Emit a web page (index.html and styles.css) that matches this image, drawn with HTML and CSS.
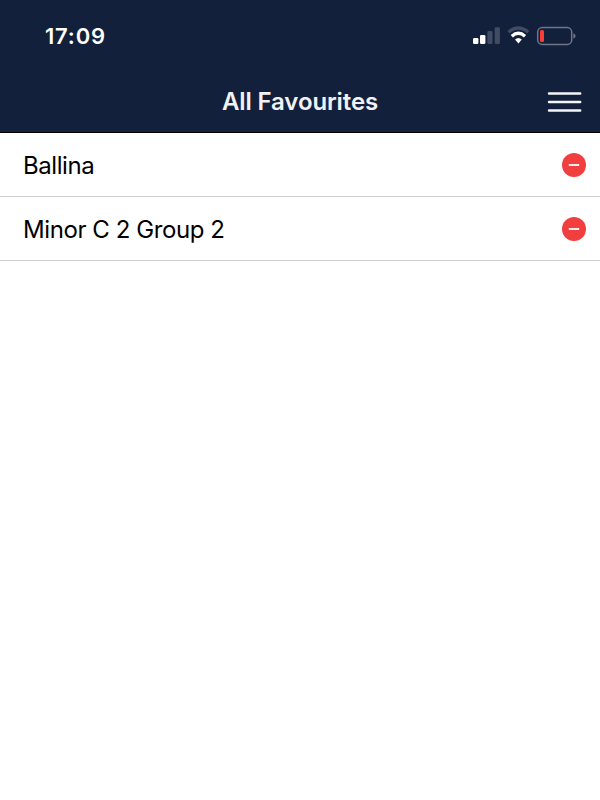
FILE: index.html
```html
<!DOCTYPE html>
<html lang="en">
<head>
  <meta charset="utf-8">
  <title>All Favourites</title>
  <link rel="stylesheet" href="styles.css">
</head>
<body>
  <header class="header">
    <div class="status-bar">
      <span class="time">17:09</span>
      <svg class="status-icons" width="104" height="20" viewBox="0 0 104 20">
        <!-- signal -->
        <rect x="1" y="12" width="5.4" height="6" rx="1.3" fill="#fff"/>
        <rect x="8" y="9" width="5.4" height="9" rx="1.3" fill="#fff"/>
        <rect x="15.3" y="5" width="5.2" height="13" rx="1.3" fill="#414b61"/>
        <rect x="22.7" y="1.3" width="5.2" height="16.7" rx="1.3" fill="#414b61"/>
        <!-- wifi -->
        <path d="M36.5 6.2Q46.4-2.2 56.3 6.2" fill="none" stroke="#414b61" stroke-width="3.2"/>
        <path d="M39.8 10.2Q46.4 4.4 53 10.2" fill="none" stroke="#fff" stroke-width="3.4"/>
        <path d="M43 13.6Q46.4 10.6 49.8 13.6L46.4 17.6Z" fill="#fff"/>
        <!-- battery -->
        <rect x="65.7" y="1.6" width="34" height="16.8" rx="4.5" fill="none" stroke="#6e7688" stroke-width="1.5"/>
        <rect x="68" y="4" width="4" height="12" rx="1.5" fill="#fb3d36"/>
        <path d="M101.4 7.2Q103.6 8.2 103.6 10T101.4 12.8Z" fill="#6e7688"/>
      </svg>
    </div>
    <div class="nav-bar">
      <h1>All Favourites</h1>
      <svg class="menu" width="36" height="22" viewBox="0 0 36 22" stroke="#f4f5fa" stroke-width="2.4" stroke-linecap="round">
        <path d="M2 2.5H33.2M2 11H33.2M2 19.5H33.2"/>
      </svg>
    </div>
  </header>

  <ul class="favourites">
    <li>
      <span class="name">Ballina</span>
      <svg class="remove" width="24" height="24" viewBox="0 0 24 24">
        <circle cx="12" cy="12" r="12" fill="#f13e3f"/>
        <path d="M6.8 12H17.2" stroke="#fff" stroke-width="1.8"/>
      </svg>
    </li>
    <li>
      <span class="name">Minor C 2 Group 2</span>
      <svg class="remove" width="24" height="24" viewBox="0 0 24 24">
        <circle cx="12" cy="12" r="12" fill="#f13e3f"/>
        <path d="M6.8 12H17.2" stroke="#fff" stroke-width="1.8"/>
      </svg>
    </li>
  </ul>
</body>
</html>
```
FILE: styles.css
```css
body {
  margin: 0;
  background: #fff;
  font-family: Inter, "Liberation Sans", sans-serif;
  color: #000;
}

.header {
  box-sizing: border-box;
  height: 133px;
  background: #13203b;
  border-bottom: 1px solid #000;
  color: #fff;
}

.status-bar {
  display: flex;
  align-items: center;
  justify-content: space-between;
  height: 72px;
  padding: 0 24px 0 45px;
}

.time {
  font-size: 22px;
  font-weight: 600;
  letter-spacing: 0.8px;
}

.nav-bar {
  display: grid;
  grid-template-columns: 1fr auto 1fr;
  align-items: center;
  height: 60px;
  padding: 0 17px;
}

.nav-bar h1 {
  grid-column: 2;
  margin: 0;
  padding-bottom: 2px;
  font-size: 24px;
  font-weight: 600;
  letter-spacing: -0.12px;
  color: #f1f2f6;
}

.menu {
  justify-self: end;
}

.favourites {
  list-style: none;
  margin: 0;
  padding: 0;
}

.favourites li {
  box-sizing: border-box;
  display: flex;
  align-items: center;
  justify-content: space-between;
  height: 64px;
  padding: 0 14px 0 23px;
  border-bottom: 1px solid #d0d0d0;
}

.name {
  padding-top: 2px;
  font-size: 24px;
  letter-spacing: -0.42px;
}
```
